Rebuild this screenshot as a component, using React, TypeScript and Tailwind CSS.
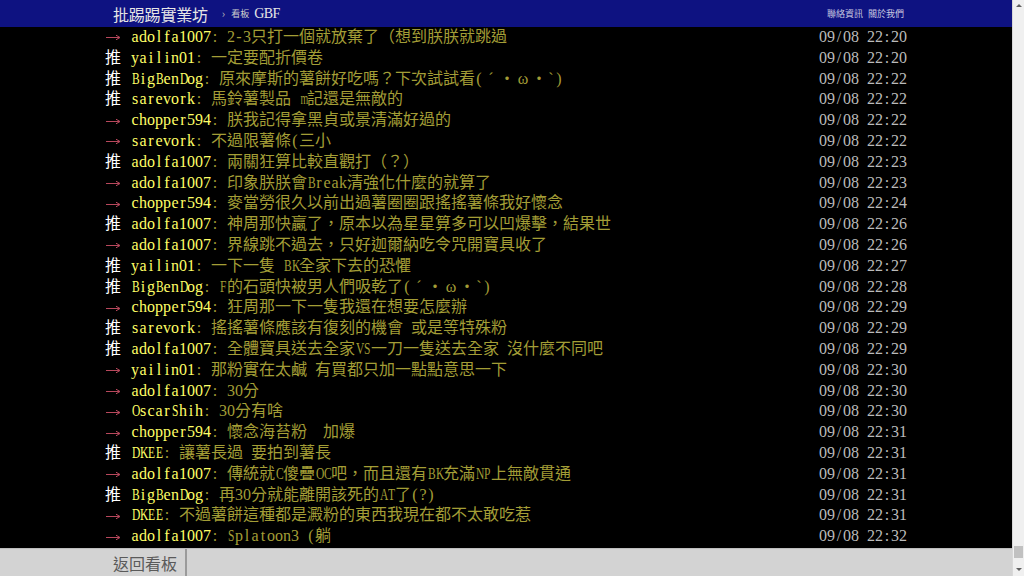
import React from "react";

type Push = { tag: "推" | "→"; user: string; text: string; time: string };

const pushes: Push[] = [
  { tag: "→", user: "adolfa1007", text: "2-3只打一個就放棄了（想到朕朕就跳過", time: "09/08 22:20" },
  { tag: "推", user: "yailin01", text: "一定要配折價卷", time: "09/08 22:20" },
  { tag: "推", user: "BigBenDog", text: "原來摩斯的薯餅好吃嗎？下次試試看(´・ω・`)", time: "09/08 22:22" },
  { tag: "推", user: "sarevork", text: "馬鈴薯製品 m記還是無敵的", time: "09/08 22:22" },
  { tag: "→", user: "chopper594", text: "朕我記得拿黑貞或景清滿好過的", time: "09/08 22:22" },
  { tag: "→", user: "sarevork", text: "不過限薯條(三小", time: "09/08 22:22" },
  { tag: "推", user: "adolfa1007", text: "兩關狂算比較直觀打（？）", time: "09/08 22:23" },
  { tag: "→", user: "adolfa1007", text: "印象朕朕會Break清強化什麼的就算了", time: "09/08 22:23" },
  { tag: "→", user: "chopper594", text: "麥當勞很久以前出過薯圈圈跟搖搖薯條我好懷念", time: "09/08 22:24" },
  { tag: "推", user: "adolfa1007", text: "神周那快贏了，原本以為星星算多可以凹爆擊，結果世", time: "09/08 22:26" },
  { tag: "→", user: "adolfa1007", text: "界線跳不過去，只好迦爾納吃令咒開寶具收了", time: "09/08 22:26" },
  { tag: "推", user: "yailin01", text: "一下一隻 BK全家下去的恐懼", time: "09/08 22:27" },
  { tag: "推", user: "BigBenDog", text: "F的石頭快被男人們吸乾了(´・ω・`)", time: "09/08 22:28" },
  { tag: "→", user: "chopper594", text: "狂周那一下一隻我還在想要怎麼辦", time: "09/08 22:29" },
  { tag: "推", user: "sarevork", text: "搖搖薯條應該有復刻的機會 或是等特殊粉", time: "09/08 22:29" },
  { tag: "推", user: "adolfa1007", text: "全體寶具送去全家VS一刀一隻送去全家 沒什麼不同吧", time: "09/08 22:29" },
  { tag: "→", user: "yailin01", text: "那粉實在太鹹 有買都只加一點點意思一下", time: "09/08 22:30" },
  { tag: "→", user: "adolfa1007", text: "30分", time: "09/08 22:30" },
  { tag: "→", user: "OscarShih", text: "30分有啥", time: "09/08 22:30" },
  { tag: "→", user: "chopper594", text: "懷念海苔粉  加爆", time: "09/08 22:31" },
  { tag: "推", user: "DKEE", text: "讓薯長過 要拍到薯長", time: "09/08 22:31" },
  { tag: "→", user: "adolfa1007", text: "傳統就C傻疊OC吧，而且還有BK充滿NP上無敵貫通", time: "09/08 22:31" },
  { tag: "推", user: "BigBenDog", text: "再30分就能離開該死的AT了(?)", time: "09/08 22:31" },
  { tag: "→", user: "DKEE", text: "不過薯餅這種都是澱粉的東西我現在都不太敢吃惹", time: "09/08 22:31" },
  { tag: "→", user: "adolfa1007", text: "Splatoon3 (躺", time: "09/08 22:32" },
];

// terminal-style cells: half width for ascii, full width for the rest
function Cells({ text }: { text: string }) {
  return (
    <>
      {Array.from(text).map((ch, i) => {
        if (ch.charCodeAt(0) >= 0x80) {
          return (
            <span key={i} className="inline-block w-[16px] text-center">
              {ch}
            </span>
          );
        }
        // squeeze wide latin glyphs into their half-width cell
        let squeeze = "";
        if ("MWmw".includes(ch)) squeeze = "scale-x-[0.62]";
        else if (/[A-Z]/.test(ch)) squeeze = "scale-x-[0.72]";
        return (
          <span key={i} className={`inline-block w-[8px] text-center ${squeeze}`}>
            {ch === " " ? "\u00a0" : ch}
          </span>
        );
      })}
    </>
  );
}

function Arrow() {
  return (
    <svg width="16" height="10" viewBox="0 0 16 10" className="shrink-0">
      <path d="M1 5.5H14.5" stroke="#b8485c" strokeWidth="1" fill="none" />
      <path d="M11 3.2L15 5.5L11 7.8" stroke="#b8485c" strokeWidth="1" fill="none" />
    </svg>
  );
}

function PushRow({ p }: { p: Push }) {
  return (
    <div className="flex h-[20.8px] items-center whitespace-pre text-[16px] leading-[20.8px]">
      <span className="flex w-[26px] shrink-0 items-center">
        {p.tag === "推" ? <span className="text-white">推</span> : <Arrow />}
      </span>
      <span className="text-[#ffff66]">
        <Cells text={p.user} />
      </span>
      <span className="text-[#a39d36]">
        <Cells text={": " + p.text} />
      </span>
      <span className="ml-auto text-[#bbbbbb]">
        <Cells text={p.time} />
      </span>
    </div>
  );
}

export default function App() {
  return (
    <div className="flex h-[576px] w-[1024px] overflow-hidden bg-black">
      <div className="flex min-w-0 flex-1 flex-col">
        {/* top bar */}
        <div className="flex h-[27px] shrink-0 items-center bg-[#0e1281] pl-[113px] pr-[108px] font-['Noto_Sans_CJK_TC',sans-serif]">
          <span className="text-[16px] tracking-[-0.2px] text-[#e6e6e6]">批踢踢實業坊</span>
          <span className="ml-[14px] text-[11px] text-[#bbbbbb]">›</span>
          <span className="ml-[6px] text-[9px] text-[#cccccc]">看板</span>
          <span className="ml-[5px] font-['Liberation_Serif',serif] text-[14px] tracking-[-0.5px] text-[#e6e6e6]">GBF</span>
          <div className="ml-auto flex gap-[5px] text-[9px] text-[#c8c8e0]">
            <span>聯絡資訊</span>
            <span>關於我們</span>
          </div>
        </div>

        {/* push list */}
        <div className="flex-1 overflow-hidden font-['Liberation_Serif','Noto_Sans_CJK_TC',serif]">
          <div className="ml-[105px] w-[802px]">
            {pushes.map((p, i) => (
              <PushRow key={i} p={p} />
            ))}
          </div>
        </div>

        {/* bottom bar */}
        <div className="flex h-[28px] shrink-0 border-t border-[#bdbdbd] bg-[#d3d3d3] pl-[105px] font-['Noto_Sans_CJK_TC',sans-serif]">
          <div className="flex items-center border-r-2 border-[#9a9a9a] px-[8px] text-[16px] text-[#5a5a5a]">
            返回看板
          </div>
        </div>
      </div>

      {/* scrollbar */}
      <div className="flex w-[12px] shrink-0 flex-col items-center border-l border-[#d8d8d8] bg-[#f0f0f0]">
        <div className="mt-[4px] h-0 w-0 border-x-[3px] border-b-[3px] border-x-transparent border-b-[#606060]" />
        <div className="flex-1" />
        <div className="h-[12px] w-[9px] bg-[#c1c1c1]" />
        <div className="mt-[10px] mb-[5px] h-0 w-0 border-x-[3px] border-t-[3px] border-x-transparent border-t-[#606060]" />
      </div>
    </div>
  );
}
